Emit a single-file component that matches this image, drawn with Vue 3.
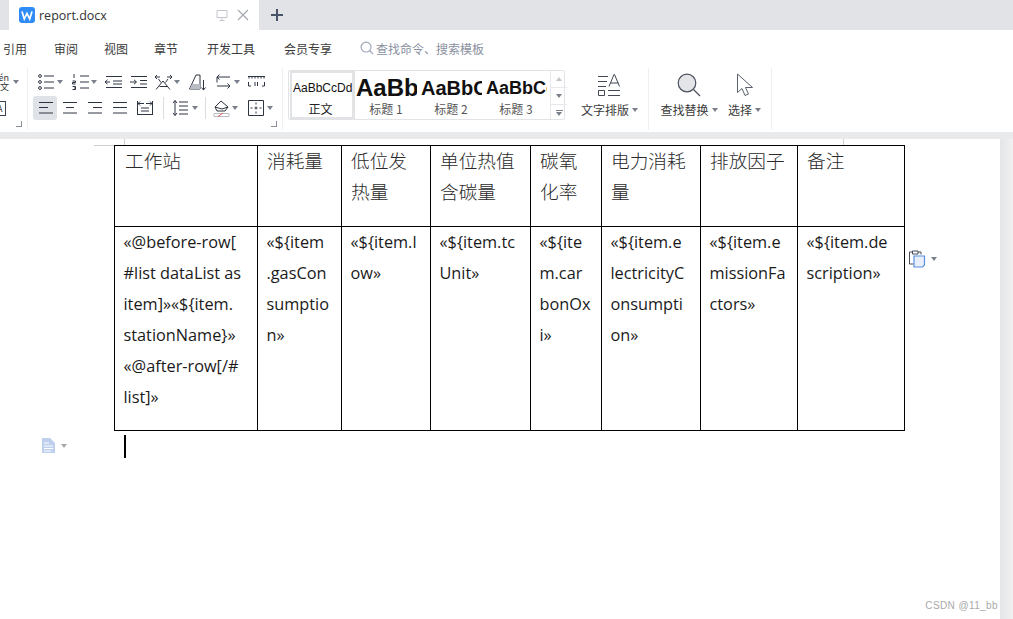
<script setup>
const menus = [
  { t: '引用', w: 51 }, { t: '审阅', w: 50 }, { t: '视图', w: 50 }, { t: '章节', w: 53 },
  { t: '开发工具', w: 77 }, { t: '会员专享', w: 76 }
]
const I = {
  list: '<circle cx="4" cy="4" r="1.4"/><circle cx="4" cy="10" r="1.4"/><circle cx="4" cy="16" r="1.4"/><path d="M8 4h10M8 10h10M8 16h10"/>',
  num: '<path d="M4 2v4M2.500 9h3v1.500h-3V12h3M2.500 14.500h3v3h-3M4 16h1.500M10 4h9M10 10h9M10 16h9"/>',
  outdent: '<path d="M3 4.500h16M3 15.500h16M10 9h9M10 12h9M7 10H2M4.500 7.800 2 10l2.500 2.200"/>',
  indent: '<path d="M3 4.500h16M3 15.500h16M12 8.500h7M12 12h7M2 10h6M6 7.800 8.500 10 6 12.200"/>',
  dir: '<path d="M2 5h5M4 3l-2 2 2 2M19 5h-5M17 3l2 2-2 2M3 17.500 10 9l7 8.500M8 10.500 5.500 7M12.500 10.500 15 7M6.500 14.500h8"/>',
  sort: '<path d="M2.500 17 9 3h4v14H2.500" /><path d="M5 12h8v5H2.800z" fill="#b9bcc3" stroke="none"/><path d="M16.500 8v10M14.500 15.500l2 2.500 2-2.500"/>',
  brk: '<path d="M17 5.500H4M6.500 3 4 5.500 6.500 8M4 5.500v5.500M4 14.500h13M14.500 12 17 14.500 14.500 17" transform="translate(0 -.500)"/>',
  ruler: '<path d="M2 4.500h17M3 4.500v2M6 4.500v2M9 4.500v2M12 4.500v2M15 4.500v2M18 4.500v2M2.500 10v4h2.500M18.500 10v4H16M9 10v4M11.500 10v4"/>',
  left: '<path d="M4 4.500h14M4 9.500h9M4 15h14"/>',
  center: '<path d="M3 4.500h14M6 9.500h8M3 15h14"/>',
  right: '<path d="M3 4.500h14M8 9.500h9M3 15h14"/>',
  justify: '<path d="M3 4.500h14M3 9.500h14M3 15h14"/>',
  spread: '<path d="M2.500 3v14M17.500 3v14M2.500 16.500h15M6 10h8M6 13h8M2.500 5.500H9M5 3.500l-2 2 2 2M17.500 5.500H11M15 3.500l2 2-2 2"/>',
  spacing: '<path d="M4 2.500v15M2 5l2-2.500L6 5M2 15l2 2.500L6 15M8 4h9M8 8h9M8 12h9M8 16h9"/>',
  shade: '<path d="M4 9 10 3l7 6-3 4H6zM4 9l7 2 6-2"/><path d="M3 15.500h15v3H3z" stroke="#b6bac2"/><path d="M7 18.500l5-3.500" stroke="#e35b5b"/>',
  border: '<path d="M2.500 2.500h15v15h-15z"/><path d="M10 4.500v2M10 8.500v3M10 13.500v2M4.500 10h2M8.500 10h3M13.500 10h2" stroke-width="1"/>'
}
const row1 = [
  { k: 'list', w: 34, c: 1 }, { k: 'num', w: 33, c: 1 }, { k: 'outdent', w: 25 }, { k: 'indent', w: 25 },
  { k: 'dir', w: 34, c: 1 }, { k: 'sort', w: 26 }, { k: 'brk', w: 33, c: 1 }, { k: 'ruler', w: 24 }
]
const row2 = [
  { k: 'left', w: 25, on: 1 }, { k: 'center', w: 25 }, { k: 'right', w: 25 }, { k: 'justify', w: 25 }, { k: 'spread', w: 21 },
  { sep: 1, mr: 7 }, { k: 'spacing', w: 27, c: 1 }, { sep: 1, mr: 5 }, { k: 'shade', w: 35, c: 1 }, { k: 'border', w: 30, c: 1 }
]
const styles = [
  { cls: 's0', s: 'AaBbCcDd', l: '正文' }, { cls: 's1', s: 'AaBb', l: '标题 1' },
  { cls: 's2', s: 'AaBbC', l: '标题 2' }, { cls: 's3', s: 'AaBbCc', l: '标题 3' }
]
const cols = [143, 84, 89, 100, 71, 99, 97, 107]
const head = [['工作站'], ['消耗量'], ['低位发', '热量'], ['单位热值', '含碳量'], ['碳氧', '化率'], ['电力消耗', '量'], ['排放因子'], ['备注']]
const body = [
  ['«@before-row[', '#list dataList as', 'item]»«${item.', 'stationName}»', '«@after-row[/#', 'list]»'],
  ['«${item', '.gasCon', 'sumptio', 'n»'], ['«${item.l', 'ow»'], ['«${item.tc', 'Unit»'],
  ['«${ite', 'm.car', 'bonOx', 'i»'], ['«${item.e', 'lectricityC', 'onsumpti', 'on»'],
  ['«${item.e', 'missionFa', 'ctors»'], ['«${item.de', 'scription»']
]
</script>

<template>
  <div class="app">
    <header class="tabbar">
      <div class="tab">
        <svg class="logo" width="16" height="16" viewBox="0 0 16 16">
          <rect width="16" height="16" rx="3" fill="#2f8cf6" />
          <path d="M3 4.500 5.300 12 8 6.500l2.700 5.500L13 4.500" fill="none" stroke="#fff" stroke-width="1.700" />
        </svg>
        <span class="fname">report.docx</span>
        <svg class="pin" width="14" height="14" viewBox="0 0 14 14" fill="none" stroke="#c3c6cc">
          <path d="M2 2.500h10v7H2zM7 9.500v2.500M4.500 12.500h5" />
        </svg>
        <svg class="close" width="12" height="12" viewBox="0 0 12 12" fill="none" stroke="#a4a7ad" stroke-width="1.100">
          <path d="M1 1l10 10M11 1 1 11" />
        </svg>
      </div>
      <svg class="plus" width="14" height="14" viewBox="0 0 14 14" fill="none" stroke="#4a5468" stroke-width="2">
        <path d="M7 1v12M1 7h12" />
      </svg>
    </header>

    <nav class="menu">
      <span v-for="m in menus" :key="m.t" class="mitem" :style="{ width: m.w + 'px' }">{{ m.t }}</span>
      <span class="search">
        <svg width="14" height="14" viewBox="0 0 15 15" fill="none" stroke="#9ea6b8" stroke-width="1.300">
          <circle cx="6.500" cy="6.500" r="5.300" /><path d="M10.500 10.500 14 14" />
        </svg>
        查找命令、搜索模板
      </span>
    </nav>

    <section class="ribbon">
      <div class="grp g1">
        <div class="cliprow">
          <span class="phon"><b>én</b><b>文</b></span><i class="caret"></i>
        </div>
        <div class="cliprow second"><span class="boxa">A</span></div>
        <i class="corner"></i>
      </div>
      <div class="grp g2">
        <div class="trow r1">
          <span v-for="t in row1" :key="t.k" class="tool" :style="{ width: t.w + 'px' }">
            <svg width="20" height="20" viewBox="0 0 20 20" fill="none" stroke="#2e3542" v-html="I[t.k]"></svg>
            <i v-if="t.c" class="caret"></i>
          </span>
        </div>
        <div class="trow r2">
          <template v-for="(t, i) in row2" :key="i">
            <i v-if="t.sep" class="vsep" :style="{ marginRight: t.mr + 'px' }"></i>
            <span v-else class="tool" :style="{ width: t.w + 'px' }">
              <svg :class="{ active: t.on }" width="20" height="20" viewBox="0 0 20 20" fill="none" stroke="#2e3542" v-html="I[t.k]"></svg>
              <i v-if="t.c" class="caret"></i>
            </span>
          </template>
        </div>
        <i class="corner"></i>
      </div>
      <div class="gallery">
        <div v-for="s in styles" :key="s.cls" class="style" :class="s.cls">
          <div class="sample">{{ s.s }}</div>
          <div class="slabel">{{ s.l }}</div>
        </div>
        <div class="sbar">
          <span class="sb"><i class="up"></i></span>
          <span class="sb"><i class="caret"></i></span>
          <span class="sb last"><i class="more"></i><i class="caret"></i></span>
        </div>
      </div>
      <div class="grp g3">
        <div class="big">
          <svg width="24" height="24" viewBox="0 0 24 24" fill="none" stroke="#424854">
            <path d="M1 3.500h10M1 8.500h9M1 13.500h8M1.500 17.500h6v5h-6zM11 17.500h12M11 22.500h12M12 13.500 17 1.500h.5l5 12M13.500 10h8" />
          </svg>
          <span class="blabel">文字排版<i class="caret"></i></span>
        </div>
      </div>
      <div class="grp g4">
        <div class="big find">
          <svg width="24" height="24" viewBox="0 0 24 24" fill="#e3e5e8" stroke="#4a505c" stroke-width="1.200">
            <circle cx="10" cy="10" r="8.800" /><path d="M16.500 16.500 23 23" />
          </svg>
          <span class="blabel">查找替换<i class="caret"></i></span>
        </div>
        <div class="big pick">
          <svg width="18" height="24" viewBox="0 0 18 24" fill="#fff" stroke="#5a606c">
            <path d="M1.500 1v18.500l4.500-4 3 7 3.500-1.500-3-6.500h7z" />
          </svg>
          <span class="blabel">选择<i class="caret"></i></span>
        </div>
      </div>
    </section>

    <div class="strip"></div>

    <main class="workspace">
      <article class="page">
        <i class="mark mv m1"></i><i class="mark mv m2"></i><i class="mark mh"></i>
        <table class="tbl">
          <colgroup><col v-for="(c, i) in cols" :key="i" :style="{ width: c + 'px' }" /></colgroup>
          <tbody>
            <tr class="hrow">
              <td v-for="(c, i) in head" :key="i"><div v-for="l in c" :key="l">{{ l }}</div></td>
            </tr>
            <tr class="brow">
              <td v-for="(c, i) in body" :key="i"><div v-for="l in c" :key="l">{{ l }}</div></td>
            </tr>
          </tbody>
        </table>
        <div class="caretline"></div>
        <span class="float paste">
          <svg width="19" height="18" viewBox="0 0 19 18" fill="none">
            <path d="M4.500 2H1.500v12h4M10 2h3v2.500M4.500 1h5.500v3H4.500z" stroke="#444a56" />
            <path d="M6 6h10.500v9l-2 2H6z" fill="#e8eefa" stroke="#5b8fe0" stroke-width="1.200" />
          </svg>
          <i class="caret"></i>
        </span>
        <span class="float docmark">
          <svg width="13" height="15" viewBox="0 0 13 15">
            <path d="M0 0h8l5 5v10H0z" fill="#bed0ee" />
            <path d="M2 5h5M2 8h9M2 10.500h9M2 13h7" stroke="#fff" />
          </svg>
          <i class="caret"></i>
        </span>
      </article>
      <div class="gutter"></div>
      <span class="water">CSDN @11_bb</span>
    </main>
  </div>
</template>

<style>
html, body { margin: 0; background: #fff; }
</style>

<style scoped>
.app {
  width: 1013px; height: 619px; overflow: hidden; display: flex; flex-direction: column;
  font-family: "Noto Sans CJK SC", "Noto Sans", sans-serif; color: #333; font-size: 12px; position: relative;
}
i { display: block; font-style: normal; }
.tabbar { height: 30px; flex: none; background: #e2e3e7; display: flex; align-items: center; padding-left: 9px; box-sizing: border-box; }
.tab { width: 250px; height: 30px; background: #fff; display: flex; align-items: center; box-sizing: border-box; padding-left: 10px; }
.logo { flex: none; }
.fname { margin-left: 4px; font: 12.500px "Open Sans", sans-serif; color: #333; width: 176px; flex: none; }
.pin { flex: none; }
.close { margin-left: 8px; flex: none; }
.plus { margin-left: 11px; }

.menu { height: 38px; flex: none; display: flex; align-items: center; padding: 0 0 2px 3px; box-sizing: border-box; background: #fff; font-size: 12px; color: #3a3a3a; }
.mitem { flex: none; white-space: nowrap; }
.search { display: flex; align-items: center; gap: 2px; color: #8a90a0; }

.ribbon { height: 64px; flex: none; display: flex; background: #fff; }
.grp { position: relative; border-right: 1px solid #eeeff1; height: 62px; box-sizing: border-box; flex: none; }
.g1 { width: 28px; overflow: hidden; }
.cliprow { display: flex; align-items: center; height: 20px; margin-top: 4px; }
.cliprow.second { margin-top: 6px; }
.phon { width: 13px; display: flex; flex-direction: column; align-items: flex-end; line-height: 9px; font-size: 9px; padding-right: 1px; box-sizing: border-box; overflow: hidden; }
.phon b { font-weight: 400; display: block; white-space: nowrap; margin-right: 3px; }
.boxa { display: block; width: 5px; height: 13px; margin-left: 0; border: 1px solid #3a4250; border-left: 0; font-size: 9px; line-height: 13px; overflow: hidden; text-indent: -3px; }
.cliprow .caret { margin-left: 0; }
.g2 { width: 255px; padding: 4px 0 0 7px; }
.trow { display: flex; height: 20px; align-items: center; }
.r1 { margin-left: 1px; }
.r2 { margin-top: 6px; }
.tool { display: flex; align-items: center; flex: none; }
.tool svg { flex: none; }
.tool svg.active { background: #dfe3e7; box-shadow: 0 0 0 2px #dfe3e7; border-radius: 1px; }
.tool .caret { margin-left: 1px; }
.caret { width: 0; height: 0; border: 3px solid transparent; border-top: 4px solid #7a7f8c; border-bottom: 0; flex: none; }
.vsep { width: 1px; height: 22px; background: #dcdee2; margin-left: 7px; flex: none; }
.corner { position: absolute; right: 5px; bottom: 3px; width: 5px; height: 5px; border-right: 1px solid #8a8f9a; border-bottom: 1px solid #8a8f9a; }

.gallery { margin: 2px 6px 0 5px; width: 277px; height: 50px; border: 1px solid #e2e3e7; border-radius: 2px; box-sizing: border-box; display: flex; flex: none; padding-left: 1px; }
.style { width: 65px; flex: none; overflow: hidden; text-align: center; box-sizing: border-box; padding-top: 2px; }
.s0 { width: 65px; border: 2px solid #e2e3e5; border-right-width: 3px; padding-top: 0; }
.sample { height: 30px; width: 61px; line-height: 30px; white-space: nowrap; font-family: "Liberation Sans", sans-serif; color: #111; overflow: hidden; text-align: left; padding-left: 1px; }
.slabel { font-size: 12px; line-height: 14px; color: #555; margin-top: -1px; padding-right: 3px; }
.s0 .slabel { color: #222; }
.s1 .sample { font-size: 24px; font-weight: 700; }
.s2 .sample { font-size: 20px; font-weight: 700; }
.s3 .sample { font-size: 18px; font-weight: 700; }
.sbar { width: 16px; margin-left: auto; border-left: 1px solid #e8e9ec; display: flex; flex-direction: column; flex: none; }
.sb { height: 16px; display: flex; flex-direction: column; align-items: center; justify-content: center; gap: 1px; border-bottom: 1px solid #e8e9ec; flex: none; }
.sb.last { border-bottom: 0; }
.up { width: 0; height: 0; border: 3px solid transparent; border-bottom: 4px solid #c2c5cc; border-top: 0; }
.more { width: 7px; height: 1px; background: #7a7f8c; }
.sbar .caret { border-top-color: #7a7f8c; }

.g3 { width: 78px; display: flex; justify-content: center; }
.g4 { width: 123px; display: flex; padding-left: 11px; }
.big { display: flex; flex-direction: column; align-items: center; flex: none; padding-top: 5px; }
.find { width: 58px; margin-right: 10px; }
.pick { width: 33px; }
.blabel { display: flex; align-items: center; gap: 3px; margin-top: 5px; font-size: 12px; line-height: 16px; color: #3a3a3a; white-space: nowrap; }

.strip { height: 7px; flex: none; background: #e9eaec; }
.workspace { flex: 1; display: flex; min-height: 0; position: relative; background: #fff; }
.page { width: 1000px; flex: none; box-sizing: border-box; padding: 6px 0 0 114px; position: relative; background: #fff; }
.gutter { flex: 1; background: linear-gradient(90deg, #e4e5e7, #f1f1f2); }
.mark { position: absolute; background: #cfcfcf; }
.mv { top: 0; width: 1px; height: 6px; }
.m1 { left: 124px; }
.m2 { left: 843px; }
.mh { left: 94px; top: 6px; width: 20px; height: 1px; }

.tbl { border-collapse: collapse; table-layout: fixed; width: 791px; font-family: "Open Sans", "Noto Sans CJK SC", sans-serif; color: #1a1a1a; }
.tbl td { border: 1px solid #000; vertical-align: top; padding: 0 0 0 8.500px; line-height: 31px; white-space: nowrap; overflow: hidden; box-sizing: border-box; }
.hrow td { height: 81px; font-family: "Noto Sans CJK SC", sans-serif; font-size: 18.670px; font-weight: 300; padding-left: 9px; color: #2a2a2a; }
.hrow td:first-child { padding-left: 10px; }
.hrow td div:first-child { margin-top: -2px; }
.brow td { height: 204px; font-size: 16.300px; }
.caretline { width: 2px; height: 23px; background: #000; margin: 4px 0 0 10px; }
.float { position: absolute; display: flex; align-items: center; gap: 4px; }
.paste { left: 908px; top: 111px; }
.docmark { left: 42px; top: 299px; gap: 6px; }
.docmark .caret { border-top-color: #a8a8a8; }
.water { position: absolute; right: 15px; bottom: 8px; font: 10px "Liberation Sans", sans-serif; color: #a8a8a8; letter-spacing: .4px; }
</style>
